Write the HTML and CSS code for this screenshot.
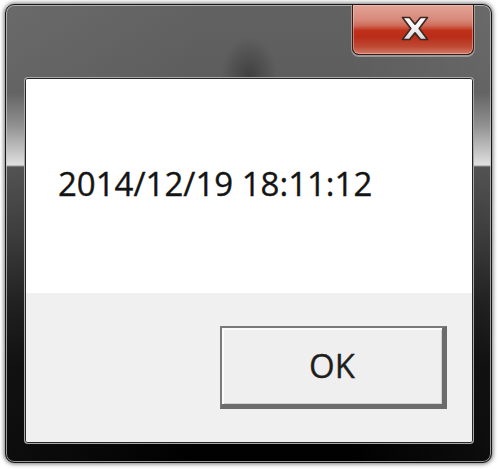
FILE: index.html
```html
<!DOCTYPE html>
<html>
<head>
<meta charset="utf-8">
<link rel="stylesheet" href="styles.css">
</head>
<body>
<div class="window">
  <div class="titlebar">
    <button class="close" aria-label="Close">
      <svg width="28" height="25" viewBox="0 0 28 25">
        <defs>
          <linearGradient id="xg" x1="0" y1="0" x2="0" y2="1">
            <stop offset="0" stop-color="#ffffff"/>
            <stop offset="0.5" stop-color="#f2f2f2"/>
            <stop offset="1" stop-color="#d8d8d8"/>
          </linearGradient>
        </defs>
        <polygon points="1.5,1.5 8.5,1.5 14,8.2 19.5,1.5 26.5,1.5 18.2,12.5 26.5,23.5 19.5,23.5 14,16.8 8.5,23.5 1.5,23.5 9.8,12.5" fill="url(#xg)" stroke="#3b2622" stroke-width="1.6" stroke-linejoin="round"/>
      </svg>
    </button>
  </div>
  <div class="client">
    <div class="message">2014/12/19 18:11:12</div>
    <div class="footer">
      <button class="ok">OK</button>
    </div>
  </div>
</div>
</body>
</html>
```
FILE: styles.css
```css
html, body {
  margin: 0;
  padding: 0;
  background: #ffffff;
}
body {
  width: 500px;
  height: 469px;
  overflow: hidden;
  padding: 4px 8px 6px 5px;
  box-sizing: border-box;
}
.window {
  width: 487px;
  height: 459px;
  box-sizing: border-box;
  border: 1px solid #151515;
  border-radius: 9px;
  display: flex;
  flex-direction: column;
  box-shadow: inset 0 0 0 1px rgba(200,200,200,0.75), 0 0 4px 1px rgba(0,0,0,0.55);
  background:
    radial-gradient(ellipse 28px 40px at 243px 72px, rgba(0,0,0,0.32), rgba(0,0,0,0)),
    linear-gradient(to right, rgba(255,255,255,0.05), rgba(255,255,255,0) 40%, rgba(255,255,255,0) 70%, rgba(255,255,255,0.05)),
    linear-gradient(to bottom, #626262 0, #5c5c5c 88px, #8a8a8a 120px, #d4d4d4 155px, #dedede 160px, #4a4a4a 162px, #333333 230px, #151515 300px, #050505 360px, #000000 100%);
}
.titlebar {
  height: 73px;
  flex: none;
  display: flex;
  justify-content: flex-end;
  align-items: flex-start;
  padding-right: 17px;
}
.close {
  width: 122px;
  height: 50px;
  margin: 0;
  padding: 0;
  border: 1px solid #3a1a14;
  border-top: none;
  border-radius: 0 0 7px 7px;
  display: flex;
  align-items: center;
  justify-content: center;
  padding-left: 4px;
  padding-bottom: 2px;
  box-sizing: border-box;
  background: linear-gradient(to bottom, #e2a496 0%, #d8897a 30%, #cf6b58 42%, #c0311b 52%, #b92c18 65%, #be4a34 85%, #d07a68 100%);
  box-shadow: inset 0 0 0 1px rgba(255,210,200,0.45), 0 1px 0 1px rgba(200,200,200,0.55);
}
.client {
  flex: 1;
  margin: 0 18px 19px 19px;
  border: 1px solid #262626;
  border-radius: 3px;
  box-shadow: 0 0 0 1px #a8a8a8;
  background: #f0f0f0;
  display: flex;
  flex-direction: column;
  overflow: hidden;
}
.message {
  height: 214px;
  flex: none;
  box-sizing: border-box;
  background: #ffffff;
  padding: 82px 0 0 32px;
  font-family: "Open Sans", "Liberation Sans", sans-serif;
  font-size: 33px;
  color: #141414;
  -webkit-text-stroke: 0.35px #141414;
  line-height: normal;
}
.footer {
  flex: 1;
  display: flex;
  justify-content: flex-end;
  align-items: flex-start;
  padding: 33px 25px 0 0;
  background: #f0f0f0;
}
.ok {
  width: 227px;
  height: 83px;
  box-sizing: border-box;
  border: 2px solid #7a7a7a;
  border-right: 5px solid #6b6b6b;
  border-bottom: 5px solid #6b6b6b;
  box-shadow: inset 2px 2px 0 #fbfbfb, inset -1px -1px 0 #d0d0d0;
  background: #efefef;
  font-family: "Open Sans", "Liberation Sans", sans-serif;
  font-size: 33px;
  color: #1e1e1e;
  -webkit-text-stroke: 0.3px #1e1e1e;
  padding: 0 0 2px 0;
  margin: 0;
}
```
